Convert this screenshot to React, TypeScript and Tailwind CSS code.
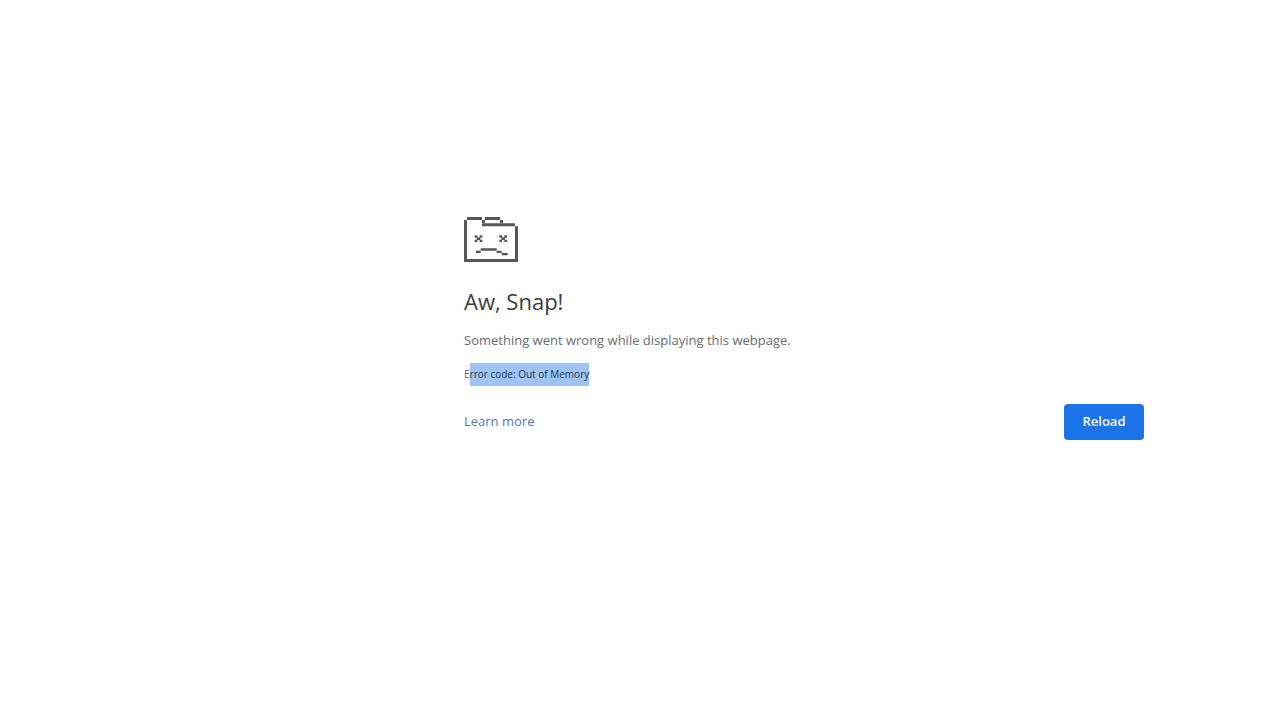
function SadTabIcon() {
  return (
    <svg
      width="54"
      height="45"
      viewBox="0 0 162 135"
      fill="#55565a"
      role="img"
      aria-label="Crashed page"
    >
      <path d="M9 0H54V9H9ZM63 0H108V9H63ZM54 9H63V18H54ZM108 9H117V18H108ZM54 19H153V28H54ZM0 9H9V126H0ZM153 28H162V126H153ZM0 126H162V135H0Z" />
      <path d="M32 55h8v7h-8zM47 55h8v7h-8zM38 61h11v8h-11zM32 68h8v7h-8zM47 68h8v7h-8z" />
      <path d="M106 55h8v7h-8zM121 55h8v7h-8zM112 61h11v8h-11zM106 68h8v7h-8zM121 68h8v7h-8z" />
      <path d="M36 101h14v7h-14zM50 94h48v7h-48zM98 101h15v7h-15zM113 108h18v7h-18z" />
    </svg>
  );
}

export default function App() {
  return (
    <div className="min-h-screen bg-white pt-[217px] pr-[136px] font-['Open_Sans','Noto_Sans',sans-serif]">
      <main className="ml-auto w-full max-w-[680px]">
        <SadTabIcon />
        <h1 className="mt-6 text-[22px] leading-[30px] text-[#3c3d40]">Aw, Snap!</h1>
        <p className="mt-3.5 text-[13px] leading-5 text-[#6b6c70]">
          Something went wrong while displaying this webpage.
        </p>
        <p className="mt-[13px] flex text-[10px] leading-[23px] text-[#5f6368]">
          <span>E</span>
          <span className="bg-[#9fc3f3] text-[#1d3557]">rror code: Out of Memory</span>
        </p>
        <div className="mt-[18px] flex items-center justify-between text-[13px]">
          <a href="#learn-more" className="text-[#4f7ab8]">
            Learn more
          </a>
          <button
            type="button"
            className="h-9 w-20 rounded bg-[#1a73e8] font-semibold text-white"
          >
            Reload
          </button>
        </div>
      </main>
    </div>
  );
}
